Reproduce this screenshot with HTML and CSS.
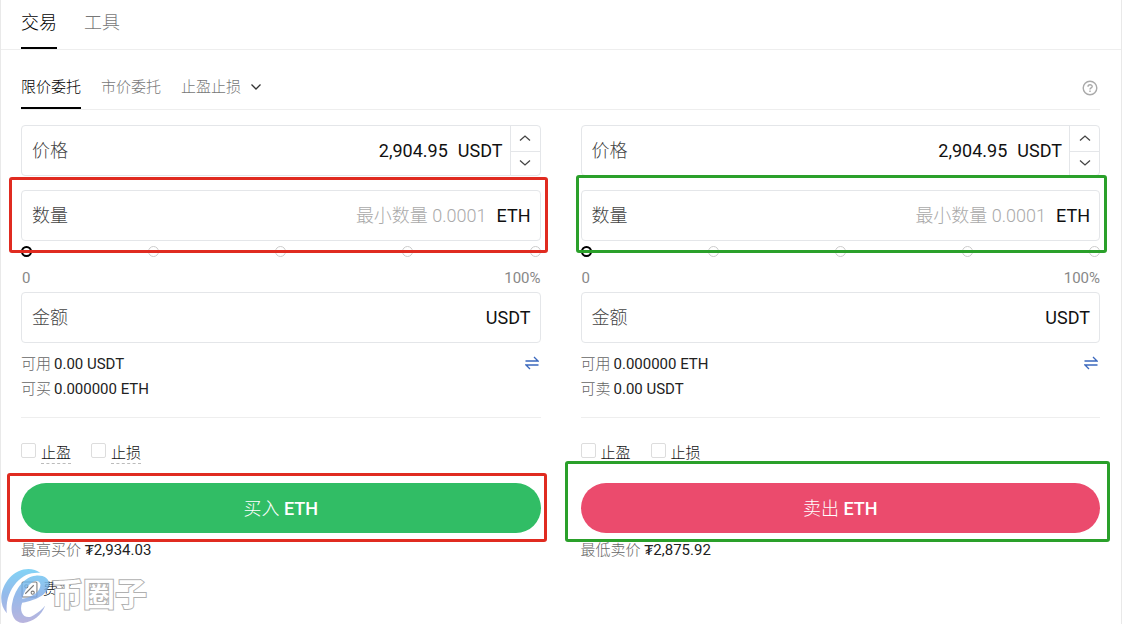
FILE: index.html
```html
<!DOCTYPE html>
<html lang="zh-CN">
<head>
<meta charset="utf-8">
<title>交易 ETH/USDT</title>
<link rel="stylesheet" href="styles.css">
</head>
<body>
<main class="panel">
  <nav class="tabs">
    <button class="tab active" type="button">交易</button>
    <button class="tab" type="button">工具</button>
  </nav>
  <div class="content">
    <div class="order-types">
      <button class="type active" type="button">限价委托</button>
      <button class="type" type="button">市价委托</button>
      <button class="type" type="button">止盈止损
        <svg class="caret" viewBox="0 0 10 6"><path d="M0.5 0.5 5 5 9.5 0.5"/></svg>
      </button>
      <button class="help" type="button" aria-label="帮助">
        <svg viewBox="0 0 16 16"><circle cx="8" cy="8" r="6.800"/><path d="M6 6.700C6 4.200 10.200 4.200 10.200 6.500 10.200 8 8 7.900 8 9.500M8 10.500V12"/></svg>
      </button>
    </div>
    <div class="forms">
      <form class="side">
        <div class="field">
          <label for="buy-price">价格</label>
          <input id="buy-price" type="text" value="2,904.95">
          <span class="unit">USDT</span>
          <div class="stepper">
            <button type="button" aria-label="增加"><svg viewBox="0 0 12 6"><path d="M1 5.500 6 1 11 5.500"/></svg></button>
            <button type="button" aria-label="减少"><svg viewBox="0 0 12 6"><path d="M1 0.500 6 5 11 0.500"/></svg></button>
          </div>
        </div>
        <div class="marked">
          <div class="field">
            <label for="buy-qty">数量</label>
            <input id="buy-qty" type="text" placeholder="最小数量 0.0001">
            <span class="unit">ETH</span>
          </div>
          <div class="slider">
            <div class="stops"><i></i><i></i><i></i><i></i><i></i></div>
            <input type="range" min="0" max="100" value="0" aria-label="买入比例">
          </div>
          <div class="mark mark-buy-qty"></div>
        </div>
        <div class="scale"><span>0</span><span>100%</span></div>
        <div class="field">
          <label for="buy-total">金额</label>
          <input id="buy-total" type="text">
          <span class="unit">USDT</span>
        </div>
        <div class="balance">
          <dl>
            <div><dt>可用</dt><dd>0.00 USDT</dd></div>
            <div><dt>可买</dt><dd>0.000000 ETH</dd></div>
          </dl>
          <button class="swap" type="button" aria-label="划转"><svg viewBox="0 0 14 14"><path d="M0.500 5H13L9 1M13.500 9H1L5 13"/></svg></button>
        </div>
        <div class="checks">
          <label><input type="checkbox"><span>止盈</span></label>
          <label><input type="checkbox"><span>止损</span></label>
        </div>
        <div class="marked">
          <button class="submit buy" type="button">买入 <b>ETH</b></button>
          <div class="mark mark-buy"></div>
        </div>
        <p class="limit">最高买价 <b>₮2,934.03</b></p>
      </form>
      <form class="side">
        <div class="field">
          <label for="sell-price">价格</label>
          <input id="sell-price" type="text" value="2,904.95">
          <span class="unit">USDT</span>
          <div class="stepper">
            <button type="button" aria-label="增加"><svg viewBox="0 0 12 6"><path d="M1 5.500 6 1 11 5.500"/></svg></button>
            <button type="button" aria-label="减少"><svg viewBox="0 0 12 6"><path d="M1 0.500 6 5 11 0.500"/></svg></button>
          </div>
        </div>
        <div class="marked">
          <div class="field">
            <label for="sell-qty">数量</label>
            <input id="sell-qty" type="text" placeholder="最小数量 0.0001">
            <span class="unit">ETH</span>
          </div>
          <div class="slider">
            <div class="stops"><i></i><i></i><i></i><i></i><i></i></div>
            <input type="range" min="0" max="100" value="0" aria-label="卖出比例">
          </div>
          <div class="mark mark-sell-qty"></div>
        </div>
        <div class="scale"><span>0</span><span>100%</span></div>
        <div class="field">
          <label for="sell-total">金额</label>
          <input id="sell-total" type="text">
          <span class="unit">USDT</span>
        </div>
        <div class="balance">
          <dl>
            <div><dt>可用</dt><dd>0.000000 ETH</dd></div>
            <div><dt>可卖</dt><dd>0.00 USDT</dd></div>
          </dl>
          <button class="swap" type="button" aria-label="划转"><svg viewBox="0 0 14 14"><path d="M0.500 5H13L9 1M13.500 9H1L5 13"/></svg></button>
        </div>
        <div class="checks">
          <label><input type="checkbox"><span>止盈</span></label>
          <label><input type="checkbox"><span>止损</span></label>
        </div>
        <div class="marked">
          <button class="submit sell" type="button">卖出 <b>ETH</b></button>
          <div class="mark mark-sell"></div>
        </div>
        <p class="limit">最低卖价 <b>₮2,875.92</b></p>
      </form>
    </div>
    <div class="fee">
      <svg viewBox="0 0 16 16"><rect x="1" y="1" width="14" height="14" rx="1"/><path d="M12 4 4 12"/><circle cx="5" cy="5" r="1.500"/><circle cx="11" cy="11" r="1.500"/></svg>
      <span>费率</span>
    </div>
  </div>
  <div class="watermark">
    <svg viewBox="0 0 52 58">
      <defs>
        <linearGradient id="wave" gradientUnits="userSpaceOnUse" x1="0" y1="0" x2="0" y2="58"><stop offset="0" stop-color="#62cbf5"/><stop offset="0.500" stop-color="#7ba9e6"/><stop offset="1" stop-color="#a9a2d6"/></linearGradient>
      </defs>
      <path fill="url(#wave)" d="M6 48C-3 38-1 22 9 11 18 1 32-1 41 6 32 5 23 8 16 16 8 25 5 36 6 48Z"/>
      <path fill="url(#wave)" d="M50 17C50 27 39 34 22 37 18 47 25 56 34 50 39 47 43 44 46 40 42 50 34 57 23 58 13 58 9 47 12 36 15 22 25 10 36 9 44 8 50 12 50 17ZM41 18C40 12 32 14 28 20 25 24 23 29 22 33 34 31 41 25 41 18Z"/>
    </svg>
    <span>币圈子</span>
  </div>
</main>
</body>
</html>
```
FILE: styles.css
```css
* { box-sizing: border-box; }

body {
  margin: 0;
  background: #fff;
  color: #111;
  font: 300 15px/20px Roboto, "Noto Sans CJK SC", sans-serif;
}

button, input {
  margin: 0;
  padding: 0;
  border: 0;
  background: none;
  color: inherit;
  font: inherit;
}

svg { display: block; fill: none; stroke: currentColor; }
dl, dd, p { margin: 0; }

.panel {
  position: relative;
  min-height: 100vh;
  margin-right: 5px;
  border: solid #e9e9e9;
  border-width: 0 1px;
  overflow: hidden;
}

.tabs {
  display: flex;
  gap: 27px;
  height: 50px;
  padding: 0 20px;
  border-bottom: 1px solid #eee;
}

.tab {
  padding-bottom: 2px;
  border-bottom: 2px solid transparent;
  color: #777;
  font-size: 18px;
}

.type { border-bottom: 2px solid transparent; color: #777; }
.tab.active, .type.active { border-color: #000; color: #000; }

.content { padding: 0 21px 0 20px; }

.order-types {
  display: flex;
  gap: 20px;
  height: 60px;
  padding-top: 16px;
  border-bottom: 1px solid #eee;
}

.type { display: flex; align-items: center; gap: 10px; }
.caret { width: 10px; height: 6px; color: #333; stroke-width: 1.3; }
.help { margin-left: auto; padding-right: 2px; color: #aaa; }
.help svg { width: 16px; height: 16px; stroke-width: 1.4; }

.forms {
  display: grid;
  grid-template-columns: 1fr 1fr;
  gap: 40px;
  padding-top: 15px;
}

.field {
  display: flex;
  align-items: center;
  height: 51px;
  border: 1px solid #e4e6e9;
  border-radius: 4px;
  padding-left: 10px;
  font-size: 18px;
}

.field label { color: #444; }
.field input { flex: 1; min-width: 0; height: 100%; text-align: right; outline: 0; font-weight: 400; }
.field input::placeholder { color: #aaa; font-weight: 300; }
.unit { padding: 0 9px 0 10px; font-weight: 400; }
.field:has(.stepper) .unit { padding-right: 7px; }

.stepper {
  display: grid;
  grid-template-rows: 1fr 1fr;
  width: 30px;
  height: 100%;
  border-left: 1px solid #e4e6e9;
  color: #444;
}

.stepper button { display: grid; place-items: center; }
.stepper button + button { border-top: 1px solid #e4e6e9; }
.stepper svg { width: 12px; height: 6px; stroke-width: 1.3; }

.marked { position: relative; }
.field + .marked { margin-top: 14px; }

.slider { display: grid; height: 11px; margin-top: 5px; }
.stops, .slider input { grid-area: 1 / 1; }
.stops { display: flex; justify-content: space-between; }
.stops i { width: 11px; height: 11px; border: 1px solid #ccc; border-radius: 50%; }
.slider input { appearance: none; width: 100%; height: 11px; }

.slider input::-webkit-slider-thumb {
  appearance: none;
  width: 11px;
  height: 11px;
  border: 2px solid #000;
  border-radius: 50%;
  background: #fff;
}

.scale {
  display: flex;
  justify-content: space-between;
  padding: 11px 0 4px 1px;
  color: #888;
  font-weight: 400;
}

.balance {
  display: flex;
  justify-content: space-between;
  align-items: flex-start;
  padding: 9px 0 15px;
  border-bottom: 1px solid #eee;
  line-height: 25px;
}

.balance dl div { display: flex; gap: 3px; }
.balance dt { color: #666; }
.balance dd { font-weight: 400; color: #222; }
.swap { padding: 4px 2px; color: #3b68bd; }
.swap svg { width: 14px; height: 14px; stroke-width: 1.3; }

.checks { display: flex; gap: 20px; padding: 25px 0 19px; }
.checks label { display: flex; align-items: flex-start; gap: 5px; color: #111; }
.checks span { border-bottom: 1px dashed #bbb; }

.checks input {
  appearance: none;
  width: 15px;
  height: 15px;
  border: 1px solid #ddd;
  border-radius: 2px;
}

.submit {
  display: block;
  width: 100%;
  height: 50px;
  padding-top: 2px;
  border-radius: 25px;
  color: #fff;
  font-size: 18px;
}

.submit b { font-weight: 500; }
.buy { background: #31bd65; }
.sell { background: #eb4b6d; }
.limit { padding-top: 7px; color: #666; }
.limit b { font-weight: 400; color: #222; }

.mark { position: absolute; border: 3px solid #e02b20; border-radius: 3px; pointer-events: none; }
.mark-buy-qty { inset: -13px -7px 4px -12px; }
.mark-buy { inset: -10px -6px -9px -14px; }
.mark-sell-qty { inset: -15px -7px 4px -5px; border-color: #2aa02a; }
.mark-sell { inset: -22px -10px -9px -16px; border-color: #2aa02a; }

.fee { display: flex; align-items: center; gap: 5px; padding-top: 19px; color: #000; }
.fee svg { width: 17px; height: 17px; color: #777; }

.watermark {
  position: absolute;
  left: 0;
  bottom: 0;
  display: flex;
  align-items: center;
  mix-blend-mode: normal;
}

.watermark svg { width: 50px; height: 58px; stroke: none; opacity: 0.8; }

.watermark span {
  color: #fff;
  font-size: 32px;
  font-weight: 700;
  line-height: 56px;
  -webkit-text-stroke: 2px #b0b0b0;
  paint-order: stroke fill;
}
```
